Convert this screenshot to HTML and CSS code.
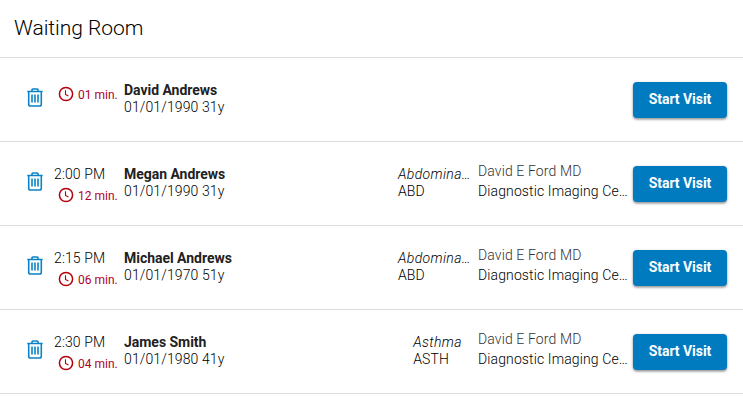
FILE: index.html
```html
<!DOCTYPE html>
<html lang="en">
<head>
    <title>Waiting Room</title>
    <meta charset="UTF-8" />
    <link rel="stylesheet" href="styles.css">
</head>
<body>
    <svg class="sprite">
        <symbol id="trash" viewBox="0 0 16 19">
            <path d="M0.3 3.5H15.7M5 3V1.7Q5 1 5.8 1H10.2Q11 1 11 1.7V3M1.7 4V16.2Q1.7 18 3.5 18H12.5Q14.3 18 14.3 16.2V4M5 6.5V14.5M8 6.5V14.5M11 6.5V14.5" />
        </symbol>
        <symbol id="clock" viewBox="0 0 16 16">
            <circle cx="8" cy="8" r="6.6" />
            <path class="hands" d="M7.5 4.2V8.5L10.4 10" />
        </symbol>
    </svg>

    <h1>Waiting Room</h1>
    <div id="visits"></div>

    <script>
        const visits = [
            { time: '', wait: '01', name: 'David Andrews', dob: '01/01/1990', age: 31 },
            { time: '2:00 PM', wait: '12', name: 'Megan Andrews', dob: '01/01/1990', age: 31, reason: 'Abdominal Pain', code: 'ABD', provider: 'David E Ford MD', location: 'Diagnostic Imaging Center' },
            { time: '2:15 PM', wait: '06', name: 'Michael Andrews', dob: '01/01/1970', age: 51, reason: 'Abdominal Pain', code: 'ABD', provider: 'David E Ford MD', location: 'Diagnostic Imaging Center' },
            { time: '2:30 PM', wait: '04', name: 'James Smith', dob: '01/01/1980', age: 41, reason: 'Asthma', code: 'ASTH', provider: 'David E Ford MD', location: 'Diagnostic Imaging Center' }
        ];

        // Shorten long labels so they stay inside their column
        function shorten(text, max) {
            return text.length > max ? text.slice(0, max) + '…' : text;
        }

        document.getElementById('visits').innerHTML = visits.map(visit => `
            <div class="visit">
                <svg class="trash"><use href="#trash" /></svg>
                <div class="time">
                    ${visit.time ? `<div>${visit.time}</div>` : ''}
                    <div class="wait"><svg class="clock"><use href="#clock" /></svg><span>${visit.wait} min.</span></div>
                </div>
                <div class="patient">
                    <div class="name">${visit.name}</div>
                    <div>${visit.dob} ${visit.age}y</div>
                </div>
                <div class="reason">
                    ${visit.reason ? `<div class="${visit.reason.length > 8 ? 'long' : ''}"><div class="reason-name">${shorten(visit.reason, 8)}</div><div>${visit.code}</div></div>` : ''}
                </div>
                <div class="provider">
                    ${visit.provider ? `<div class="doctor">${visit.provider}</div><div>${shorten(visit.location, 21)}</div>` : ''}
                </div>
                <button class="start">Start Visit</button>
            </div>
        `).join('');
    </script>
</body>
</html>
```
FILE: styles.css
```css
body {
    margin: 0;
    background: #fff;
    color: #000;
    font-family: Roboto, sans-serif;
    font-size: 14px;
    font-weight: 300;
    line-height: 17px;
    letter-spacing: 0.12px;
}
.sprite {
    display: none;
}
h1 {
    margin: 0;
    padding: 14px;
    height: 29px;
    border-bottom: 1px solid #dcdcdc;
    font-size: 21px;
    font-weight: 300;
    line-height: 28px;
    letter-spacing: -0.03px;
}
.visit {
    display: grid;
    grid-template-columns: 27px 70px 273px 81px 155px 94px;
    align-items: center;
    height: 83px;
    padding-left: 27px;
    border-bottom: 1px solid #dcdcdc;
}
svg {
    fill: none;
    stroke: currentColor;
}
.trash {
    width: 16px;
    height: 19px;
    margin-top: -4px;
    color: #0a84c6;
    stroke-width: 1.6;
}
.time {
    align-self: start;
    padding-top: 24px;
}
.wait {
    display: flex;
    align-items: center;
    gap: 4px;
    height: 23px;
    padding-left: 4px;
    color: #b0002a;
    font-size: 12px;
    font-weight: 400;
    letter-spacing: 0;
    white-space: nowrap;
}
.wait span {
    padding-top: 3px;
}
.clock {
    width: 16px;
    height: 16px;
    color: #b3000c;
    stroke-width: 1.5;
}
.hands {
    stroke-width: 1.1;
}
.patient,
.reason {
    padding-bottom: 2px;
}
.name {
    color: #212121;
    font-weight: 700;
    letter-spacing: -0.03px;
}
.reason {
    display: flex;
    justify-content: center;
}
.long {
    width: 79px;
}
.reason-name {
    font-style: italic;
    letter-spacing: 0.35px;
    white-space: nowrap;
}
.provider {
    line-height: 20px;
    padding-bottom: 6px;
    white-space: nowrap;
}
.doctor {
    color: #333;
}
.start {
    width: 94px;
    height: 36px;
    padding: 0 0 2px;
    border: none;
    border-radius: 4px;
    background: #007bc0;
    color: #fff;
    font: 700 14px Roboto, sans-serif;
    letter-spacing: -0.05px;
    box-shadow: 0 1px 3px rgba(0, 0, 0, 0.35), 0 2px 2px rgba(0, 0, 0, 0.15);
}
```
